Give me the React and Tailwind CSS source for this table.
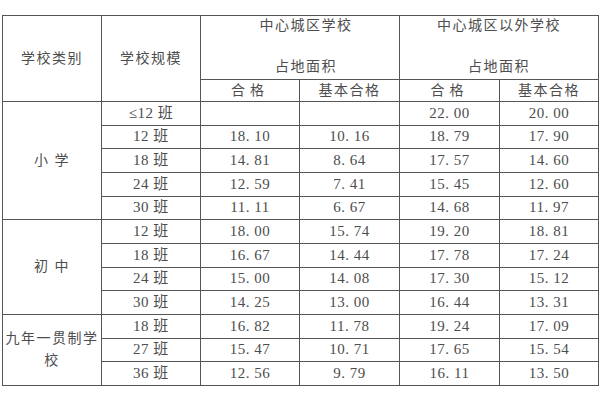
const rows = [
  { group: '小 学', span: 5, size: '≤12 班', a: '', b: '', c: '22.00', d: '20.00' },
  { size: '12 班', a: '18.10', b: '10.16', c: '18.79', d: '17.90' },
  { size: '18 班', a: '14.81', b: '8.64', c: '17.57', d: '14.60' },
  { size: '24 班', a: '12.59', b: '7.41', c: '15.45', d: '12.60' },
  { size: '30 班', a: '11.11', b: '6.67', c: '14.68', d: '11.97' },
  { group: '初 中', span: 4, size: '12 班', a: '18.00', b: '15.74', c: '19.20', d: '18.81' },
  { size: '18 班', a: '16.67', b: '14.44', c: '17.78', d: '17.24' },
  { size: '24 班', a: '15.00', b: '14.08', c: '17.30', d: '15.12' },
  { size: '30 班', a: '14.25', b: '13.00', c: '16.44', d: '13.31' },
  { group: '九年一贯制学校', span: 3, size: '18 班', a: '16.82', b: '11.78', c: '19.24', d: '17.09' },
  { size: '27 班', a: '15.47', b: '10.71', c: '17.65', d: '15.54' },
  { size: '36 班', a: '12.56', b: '9.79', c: '16.11', d: '13.50' },
];

// a number like 18.10 is printed as "18. 10" in the scan
const num = (v) => v.replace('.', '. ');

const cell = 'border border-[#555] text-center align-middle p-0';

export default function App() {
  return (
    <div
      className="w-[600px] h-[400px] bg-white pt-[15px] pl-[2px] text-[#4d4d4d]"
      style={{ fontFamily: '"Liberation Serif", "Noto Sans CJK SC", serif' }}
    >
      <table className="table-fixed border-collapse w-[596px] text-[15px] leading-none">
        <colgroup>
          <col className="w-[99px]" />
          <col className="w-[99px]" />
          <col className="w-[99px]" />
          <col className="w-[100px]" />
          <col className="w-[100px]" />
          <col className="w-[99px]" />
        </colgroup>
        <thead>
          <tr className="h-[63px]">
            <th rowSpan={2} className={`${cell} font-normal text-[14px] tracking-[1.5px]`}>学校类别</th>
            <th rowSpan={2} className={`${cell} font-normal text-[14px] tracking-[1.5px]`}>学校规模</th>
            <th colSpan={2} className={`${cell} font-normal text-[14px] tracking-[1.5px]`}>
              <div className="flex flex-col items-center justify-between h-[63px] pt-[3px] pb-[5px]">
                <span className="pl-[12px]">中心城区学校</span>
                <span className="pl-[12px]">占地面积</span>
              </div>
            </th>
            <th colSpan={2} className={`${cell} font-normal text-[14px] tracking-[1.5px]`}>
              <div className="flex flex-col items-center justify-between h-[63px] pt-[3px] pb-[5px]">
                <span>中心城区以外学校</span>
                <span>占地面积</span>
              </div>
            </th>
          </tr>
          <tr className="h-[22px]">
            <th className={`${cell} font-normal text-[14px] tracking-[5px]`}>合格</th>
            <th className={`${cell} font-normal text-[14px] tracking-[1.5px]`}>基本合格</th>
            <th className={`${cell} font-normal text-[14px] tracking-[5px]`}>合格</th>
            <th className={`${cell} font-normal text-[14px] tracking-[1.5px]`}>基本合格</th>
          </tr>
        </thead>
        <tbody>
          {rows.map((r, i) => (
            <tr key={i} className="h-[23.67px]">
              {r.group && (
                <td rowSpan={r.span} className={`${cell} text-[14px] tracking-[1.5px] leading-[22px] px-[2px]`}>
                  {r.group}
                </td>
              )}
              <td className={`${cell} tracking-[0.5px]`}>{r.size}</td>
              <td className={`${cell} tracking-[0.5px]`}>{num(r.a)}</td>
              <td className={`${cell} tracking-[0.5px]`}>{num(r.b)}</td>
              <td className={`${cell} tracking-[0.5px]`}>{num(r.c)}</td>
              <td className={`${cell} tracking-[0.5px]`}>{num(r.d)}</td>
            </tr>
          ))}
        </tbody>
      </table>
    </div>
  );
}
